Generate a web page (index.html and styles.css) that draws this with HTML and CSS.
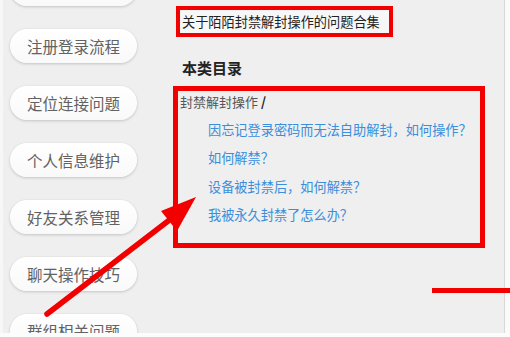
FILE: index.html
```html
<!DOCTYPE html>
<html lang="zh-CN">
<head>
<meta charset="utf-8">
<link rel="stylesheet" href="styles.css">
</head>
<body>
<div class="frame">
  <div class="page">
    <nav class="sidebar">
      <a class="pill">常见问题</a>
      <a class="pill">注册登录流程</a>
      <a class="pill">定位连接问题</a>
      <a class="pill">个人信息维护</a>
      <a class="pill">好友关系管理</a>
      <a class="pill">聊天操作技巧</a>
      <a class="pill">群组相关问题</a>
    </nav>
    <main class="main">
      <div class="title">关于陌陌封禁解封操作的问题合集</div>
      <h2 class="heading">本类目录</h2>
      <section class="catalog">
        <div class="crumb">封禁解封操作 <b>/</b></div>
        <ul class="links">
          <li><a>因忘记登录密码而无法自助解封，如何操作？</a></li>
          <li><a>如何解禁？</a></li>
          <li><a>设备被封禁后，如何解禁？</a></li>
          <li><a>我被永久封禁了怎么办？</a></li>
        </ul>
      </section>
    </main>
    <div class="edge"></div>
  </div>
  <div class="bottom"></div>
  <svg class="arrow" width="510" height="337" viewBox="0 0 510 337">
    <line x1="47" y1="314" x2="172" y2="218" stroke="#f20000" stroke-width="5.5" stroke-linecap="round"/>
    <polygon points="196,197 161,211 177,231" fill="#f20000"/>
  </svg>
  <div class="redline"></div>
</div>
</body>
</html>
```
FILE: styles.css
```css
* { box-sizing: border-box; }
html, body { margin: 0; padding: 0; }
body {
  width: 510px;
  height: 337px;
  overflow: hidden;
  background: #efefef;
  font-family: "Noto Sans CJK SC", "Noto Sans", sans-serif;
  text-spacing-trim: space-all;
}
.frame {
  position: relative;
  width: 510px;
  height: 337px;
  display: flex;
  flex-direction: column;
}
.page {
  display: flex;
  height: 333px;
  overflow: hidden;
}
.sidebar {
  width: 173px;
  flex: none;
  display: flex;
  flex-direction: column;
  gap: 23px;
  margin-top: -28px;
  padding-left: 7px;
  border-left: 3px solid #f7f7f7;
}
.pill {
  width: 127px;
  height: 34px;
  flex: none;
  border-radius: 17px;
  background: linear-gradient(#ffffff, #f9f9f9);
  box-shadow: 0 1px 3px rgba(0, 0, 0, 0.18), 0 0 1px rgba(0, 0, 0, 0.08);
  display: flex;
  align-items: center;
  justify-content: center;
  font-size: 15.5px;
  color: #626262;
}
.main {
  flex: 1;
  padding-top: 6px;
}
.title {
  display: inline-block;
  margin-left: 3px;
  border: 4px solid #f20000;
  background: #f7f7f7;
  padding: 0 9px 0 2px;
  height: 31px;
  line-height: 23px;
  font-size: 13.2px;
  color: #222;
}
.heading {
  margin: 19px 0 0 9px;
  font-size: 15px;
  line-height: 24px;
  font-weight: bold;
  color: #222;
}
.catalog {
  margin-top: 6px;
  width: 312px;
  border: 5px solid #f20000;
  padding: 0 0 14px 2px;
}
.crumb {
  font-size: 13px;
  line-height: 22px;
  color: #555;
}
.crumb b { color: #222; }
.links {
  list-style: none;
  margin: 3px 0 0;
  padding: 0 0 0 28px;
}
.links li {
  line-height: 28.3px;
  font-size: 13.2px;
  white-space: nowrap;
}
.links a { color: #3a8edb; }
.edge {
  width: 6px;
  flex: none;
  background: #fbfbfb;
  border-left: 1px solid #d8d8d8;
}
.bottom {
  height: 4px;
  background: #fcfcfc;
}
.arrow {
  position: absolute;
  left: 0;
  top: 0;
  pointer-events: none;
}
.redline {
  position: absolute;
  left: 432px;
  top: 288px;
  width: 78px;
  height: 5px;
  background: #f20000;
}
```
